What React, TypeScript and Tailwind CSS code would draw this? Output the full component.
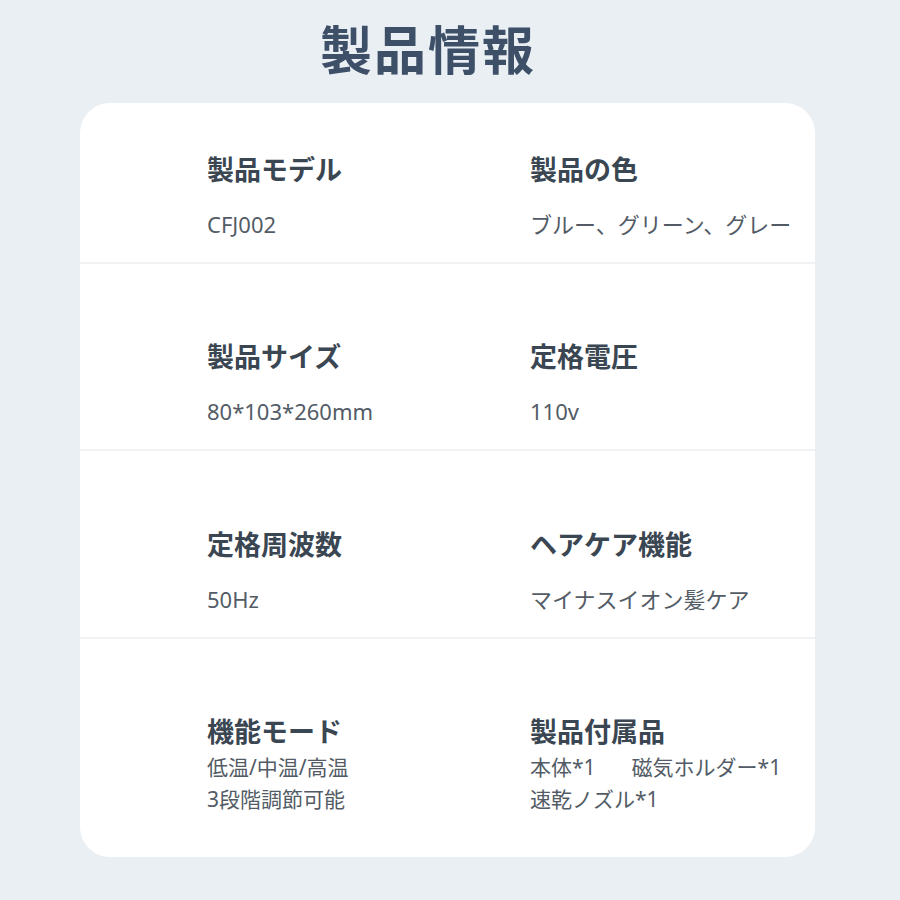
const rows: { h: string; pt: string; items: { label: string; lines: React.ReactNode[] }[] }[] = [
  {
    h: 'h-[161px]',
    pt: 'pt-[52px]',
    items: [
      { label: '製品モデル', lines: ['CFJ002'] },
      { label: '製品の色', lines: ['ブルー、グリーン、グレー'] },
    ],
  },
  {
    h: 'h-[187px]',
    pt: 'pt-[78px]',
    items: [
      { label: '製品サイズ', lines: ['80*103*260mm'] },
      { label: '定格電圧', lines: ['110v'] },
    ],
  },
  {
    h: 'h-[188px]',
    pt: 'pt-[79px]',
    items: [
      { label: '定格周波数', lines: ['50Hz'] },
      { label: 'ヘアケア機能', lines: ['マイナスイオン髪ケア'] },
    ],
  },
]

export default function App() {
  return (
    <div className="min-h-[900px] bg-[#eaeff4] font-['Noto_Sans','Noto_Sans_CJK_JP',sans-serif]">
      <h1 className="h-[103px] pl-[320px] pt-[14px] text-[52px] font-bold leading-[72px] tracking-[2px] text-[#3e5068]">
        製品情報
      </h1>

      <div className="ml-[80px] w-[735px] rounded-[30px] bg-white">
        {rows.map((row, i) => (
          <div key={i} className={`${row.h} ${row.pt} grid grid-cols-[323px_1fr] border-b-2 border-[#f1f2f3] pl-[127px]`}>
            {row.items.map((it) => (
              <div key={it.label}>
                <div className="text-[27px] font-bold leading-[30px] text-[#3a4652]">{it.label}</div>
                <div className="mt-[22px] text-[22px] leading-[34px] text-[#535c66]">{it.lines}</div>
              </div>
            ))}
          </div>
        ))}

        {/* last row, two lines of values */}
        <div className="grid h-[218px] grid-cols-[323px_1fr] pl-[127px] pt-[78px]">
          <div>
            <div className="text-[27px] font-bold leading-[30px] text-[#3a4652]">機能モード</div>
            <div className="mt-[4px] text-[21px] leading-[32px] text-[#535c66]">
              <div>低温/中温/高温</div>
              <div>3段階調節可能</div>
            </div>
          </div>
          <div>
            <div className="text-[27px] font-bold leading-[30px] text-[#3a4652]">製品付属品</div>
            <div className="mt-[4px] text-[21px] leading-[32px] text-[#535c66]">
              <div>
                本体*1<span className="ml-[36px]">磁気ホルダー*1</span>
              </div>
              <div>速乾ノズル*1</div>
            </div>
          </div>
        </div>
      </div>
    </div>
  )
}
